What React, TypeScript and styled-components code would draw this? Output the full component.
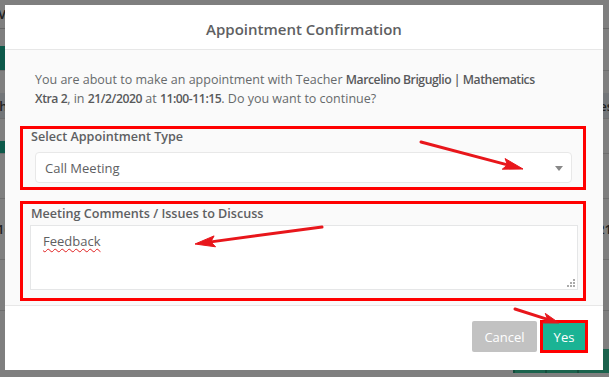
import React from "react";
import styled, { createGlobalStyle } from "styled-components";

const GlobalStyle = createGlobalStyle`
  html, body { margin: 0; padding: 0; }
  body {
    font-family: "Open Sans", "Liberation Sans", sans-serif;
    background: #fff;
    overflow: hidden;
  }
`;

// --- page behind the modal (mostly hidden by the backdrop) ---
const Page = styled.div`
  width: 609px;
  height: 377px;
  overflow: hidden;
  background: #fff;
  color: #444;
  font-size: 13px;
`;

const PageTitle = styled.div`
  height: 28px;
  border-bottom: 1px solid #ccc;
  display: flex;
  align-items: center;
  font-weight: 700;
  margin-left: -4px;
`;

const PageRow = styled.div<{ $h: number; $bg?: string }>`
  height: ${(p) => p.$h}px;
  background: ${(p) => p.$bg || "transparent"};
  border-bottom: 1px solid #ddd;
  display: flex;
  align-items: center;
  justify-content: space-between;
  font-weight: 600;
`;

const PageChip = styled.div<{ $w: number; $h: number }>`
  width: ${(p) => p.$w}px;
  height: ${(p) => p.$h}px;
  background: #1ab394;
`;

const Edge = styled.span<{ $shift: number }>`
  margin: 0 ${(p) => p.$shift}px;
`;

const PageFoot = styled.div`
  display: flex;
  justify-content: flex-end;
`;

const FootCell = styled.div`
  width: 30px;
  height: 24px;
  background: #37c79a;
  border-left: 2px solid #2a9b78;
`;

const Backdrop = styled.div`
  position: fixed;
  inset: 0;
  background: rgba(0, 0, 0, 0.5);
`;

// --- modal ---
const Modal = styled.div`
  position: fixed;
  top: 5px;
  left: 5px;
  width: 598px;
  height: 365px;
  background: #fff;
  display: flex;
  flex-direction: column;
  color: #676a6c;
`;

const Header = styled.div`
  height: 45px;
  box-sizing: border-box;
  padding-top: 3px;
  border-bottom: 1px solid #e7e7e7;
  display: flex;
  align-items: center;
  justify-content: center;
`;

const Title = styled.h4`
  margin: 0;
  font-size: 15px;
  font-weight: 600;
  color: #5e6062;
`;

const Body = styled.div`
  height: 256px;
  box-sizing: border-box;
  background: #fafafa;
  padding: 20px 17px 0 15px;
  border-bottom: 1px solid #e7e7e7;
`;

const Intro = styled.p`
  margin: 0 0 18px 15px;
  width: 505px;
  font-size: 12.5px;
  line-height: 19px;
  b {
    font-weight: 600;
    font-size: 12.2px;
    letter-spacing: -0.45px;
    color: #58595b;
  }
`;

const Marked = styled.div<{ $pad: string }>`
  border: 3px solid #ff0000;
  padding: ${(p) => p.$pad};
  & + & {
    margin-top: 11px;
  }
`;

const Label = styled.div<{ $indent: number }>`
  font-size: 12.6px;
  line-height: 16px;
  font-weight: 600;
  color: #5e6062;
  margin-left: ${(p) => p.$indent}px;
`;

const SelectBox = styled.div`
  position: relative;
  margin: 7px 0 0 4px;
  height: 31px;
  box-sizing: border-box;
  background: #fff;
  border: 1px solid #e8e8e8;
  border-radius: 4px;
  display: flex;
  align-items: center;
  padding-left: 9px;
  font-size: 13px;
  color: #5e6062;
`;

const Caret = styled.span`
  position: absolute;
  right: 8px;
  top: 13px;
  width: 0;
  height: 0;
  border-left: 4px solid transparent;
  border-right: 4px solid transparent;
  border-top: 5px solid #888;
`;

const TextBox = styled.div`
  position: relative;
  margin-top: 3px;
  height: 65px;
  box-sizing: border-box;
  background: #fff;
  border: 1px solid #e5e6e7;
  padding: 6px 12px;
  font-size: 13px;
  line-height: 18px;
  color: #5e6062;
`;

const Misspelled = styled.span`
  text-decoration: underline wavy #e02020;
  text-decoration-thickness: 1px;
  text-underline-offset: 2px;
`;

const Grip = styled.svg`
  position: absolute;
  right: 2px;
  bottom: 2px;
`;

const Footer = styled.div`
  flex: 1;
  display: flex;
  justify-content: flex-end;
  align-items: flex-start;
  padding: 14px 15px 0 0;
`;

const Actions = styled.div`
  display: flex;
  align-items: center;
  gap: 3px;
`;

const Button = styled.button<{ $primary?: boolean }>`
  font-family: inherit;
  font-size: 13px;
  color: #fff;
  border: ${(p) => (p.$primary ? "3px solid #ff0000" : "none")};
  background: ${(p) => (p.$primary ? "#1ab394" : "#c2c2c2")};
  width: ${(p) => (p.$primary ? 48 : 65)}px;
  height: ${(p) => (p.$primary ? 33 : 31)}px;
  padding: 0;
  border-radius: ${(p) => (p.$primary ? 0 : 2)}px;
`;

const Annotations = styled.svg`
  position: fixed;
  inset: 0;
  pointer-events: none;
`;

type Pt = [number, number];

const Arrow: React.FC<{ from: Pt; to: Pt; head?: number; half?: number }> = ({
  from,
  to,
  head = 20,
  half = 5.5,
}) => {
  const dx = to[0] - from[0];
  const dy = to[1] - from[1];
  const len = Math.hypot(dx, dy);
  const ux = dx / len;
  const uy = dy / len;
  const bx = to[0] - ux * head;
  const by = to[1] - uy * head;
  const px = -uy * half;
  const py = ux * half;
  const pts = `${to[0]},${to[1]} ${bx + px},${by + py} ${bx + ux * 4},${by + uy * 4} ${bx - px},${by - py}`;
  return (
    <g fill="#e8161b" stroke="#e8161b">
      <line x1={from[0]} y1={from[1]} x2={bx + ux * 4} y2={by + uy * 4} strokeWidth={3} strokeLinecap="round" />
      <polygon points={pts} strokeWidth={1} strokeLinejoin="round" />
    </g>
  );
};

export default function App() {
  return (
    <>
      <GlobalStyle />
      <Page>
        <PageTitle>Mon</PageTitle>
        <div style={{ height: 17 }} />
        <PageRow $h={24}>
          <PageChip $w={90} $h={24} />
        </PageRow>
        <div style={{ height: 22 }} />
        <PageRow $h={25} $bg="#e6edf3">
          <Edge $shift={-6}>th</Edge>
          <Edge $shift={-4}>Fees</Edge>
        </PageRow>
        <div style={{ height: 22 }} />
        <PageRow $h={12}>
          <PageChip $w={40} $h={12} />
        </PageRow>
        <PageRow $h={44} />
        <PageRow $h={60}>
          <Edge $shift={-3}>16</Edge>
          <Edge $shift={-3}>21</Edge>
        </PageRow>
        <PageRow $h={50} />
        <div style={{ height: 38 }} />
        <PageFoot>
          <FootCell />
          <FootCell />
          <FootCell />
        </PageFoot>
      </Page>
      <Backdrop />
      <Modal>
        <Header>
          <Title>Appointment Confirmation</Title>
        </Header>
        <Body>
          <Intro>
            You are about to make an appointment with Teacher{" "}
            <b>Marcelino Briguglio | Mathematics Xtra 2</b>, in <b>21/2/2020</b> at{" "}
            <b>11:00-11:15</b>. Do you want to continue?
          </Intro>
          <Marked $pad="0 11px 4px 8px">
            <Label $indent={0}>Select Appointment Type</Label>
            <SelectBox>
              Call Meeting
              <Caret />
            </SelectBox>
          </Marked>
          <Marked $pad="2px 5px 8px 7px">
            <Label $indent={1}>Meeting Comments / Issues to Discuss</Label>
            <TextBox>
              <Misspelled>Feedback</Misspelled>
              <Grip width="8" height="8" viewBox="0 0 8 8">
                <g fill="#aaa">
                  <rect x="6" y="0" width="2" height="2" />
                  <rect x="3" y="3" width="2" height="2" />
                  <rect x="6" y="3" width="2" height="2" />
                  <rect x="0" y="6" width="2" height="2" />
                  <rect x="3" y="6" width="2" height="2" />
                  <rect x="6" y="6" width="2" height="2" />
                </g>
              </Grip>
            </TextBox>
          </Marked>
        </Body>
        <Footer>
          <Actions>
            <Button>Cancel</Button>
            <Button $primary>Yes</Button>
          </Actions>
        </Footer>
      </Modal>
      <Annotations width="609" height="377" viewBox="0 0 609 377">
        <Arrow from={[421, 142]} to={[523, 169]} />
        <Arrow from={[322, 227]} to={[195, 244]} />
        <Arrow from={[515, 309]} to={[559, 323]} head={16} half={5} />
      </Annotations>
    </>
  );
}
